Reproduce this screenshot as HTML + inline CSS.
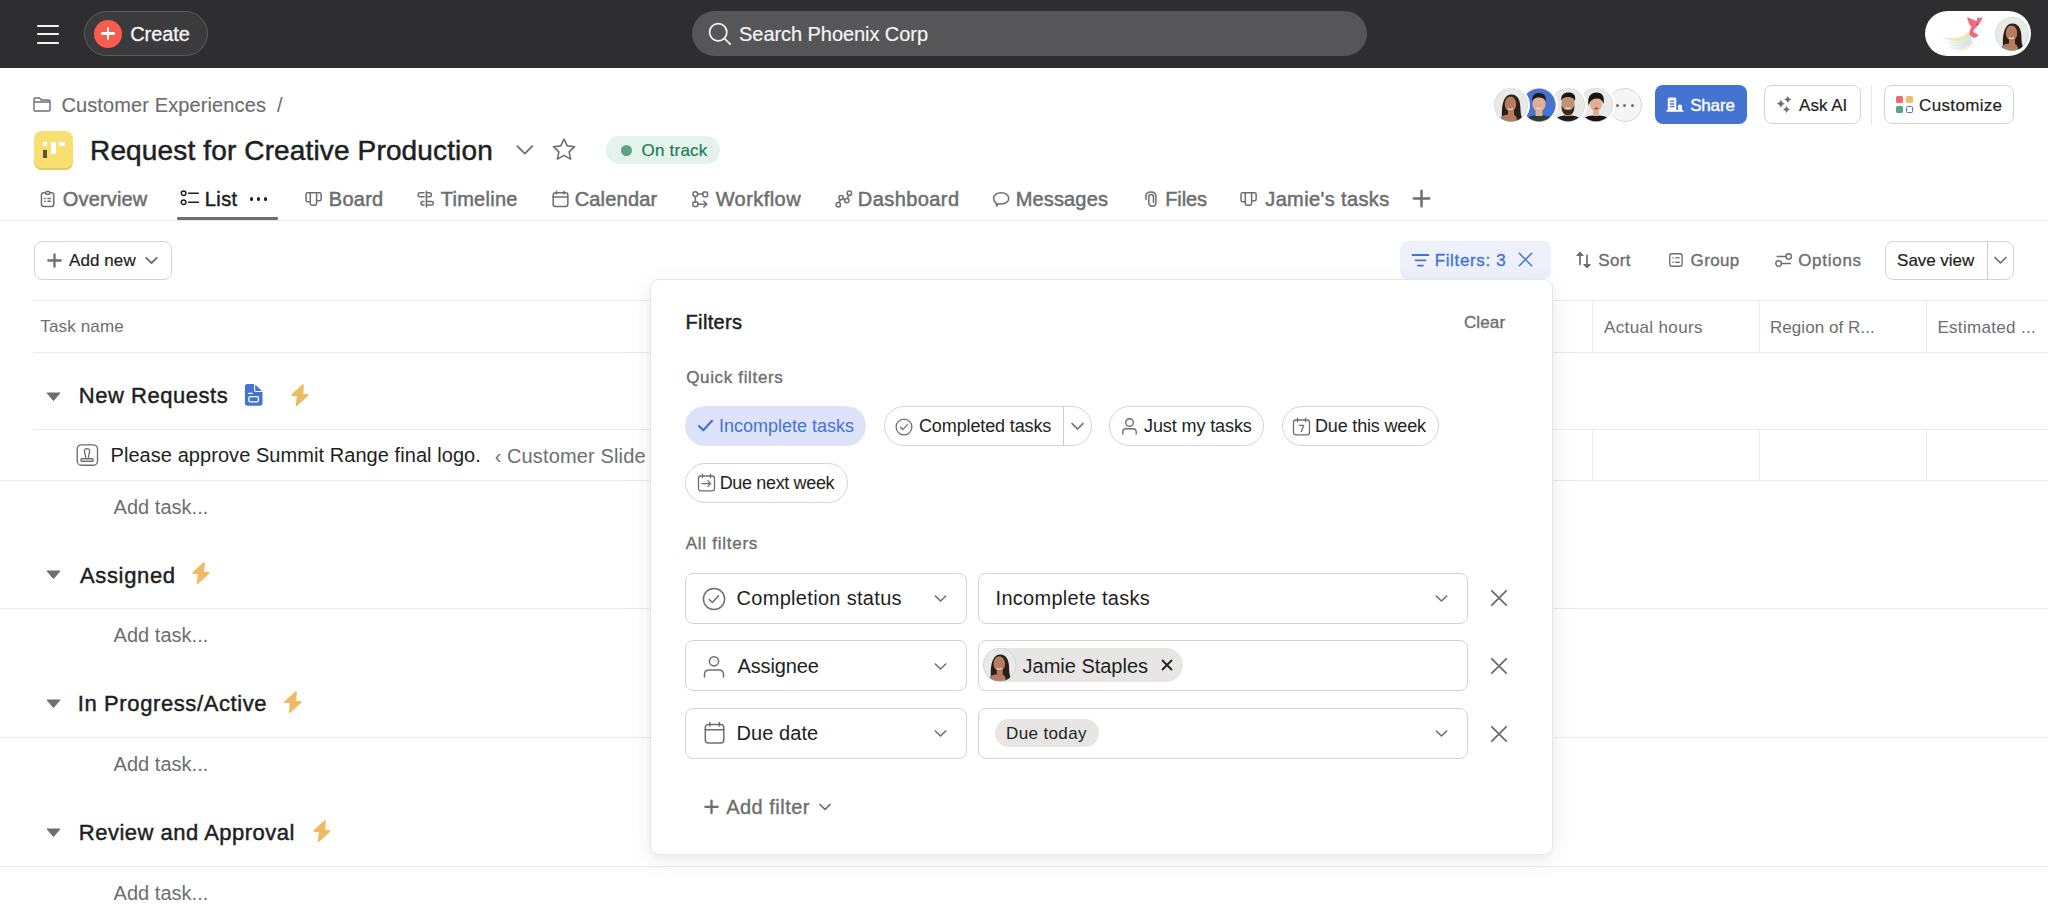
<!DOCTYPE html>
<html><head><meta charset="utf-8"><title>Request for Creative Production</title><style>
html,body{margin:0;padding:0;}
body{width:2048px;height:919px;overflow:hidden;position:relative;background:#fff;font-family:"Liberation Sans",sans-serif;}
.t{position:absolute;white-space:pre;}
svg{overflow:visible}
</style></head><body>
<div style="position:absolute;left:0px;top:0px;width:2048px;height:68px;background:#2e2e30;"></div>
<div style="position:absolute;left:37px;top:25px;width:22px;height:2px;background:#f5f4f3;border-radius:1px;"></div>
<div style="position:absolute;left:37px;top:33px;width:22px;height:2px;background:#f5f4f3;border-radius:1px;"></div>
<div style="position:absolute;left:37px;top:42px;width:22px;height:2px;background:#f5f4f3;border-radius:1px;"></div>
<div style="position:absolute;left:84px;top:11px;width:124px;height:45px;background:#3b3b3d;border:1px solid #5c5c5e;box-sizing:border-box;border-radius:23px;"></div>
<div style="position:absolute;left:94px;top:19.5px;width:28px;height:28.0px;background:#f95c4c;border-radius:50%;"></div>
<div style="position:absolute;left:101.2px;top:32.2px;width:13.599999999999994px;height:2.5999999999999943px;background:#fff;border-radius:1px;"></div>
<div style="position:absolute;left:106.7px;top:26.7px;width:2.5999999999999943px;height:13.599999999999998px;background:#fff;border-radius:1px;"></div>
<span class="t" style="left:130.15px;top:24.07px;font-size:20px;line-height:20px;color:#f5f4f3;letter-spacing:-0.041px;-webkit-text-stroke:0.3px #f5f4f3;">Create</span>
<div style="position:absolute;left:692px;top:11px;width:675px;height:45px;background:#565557;border-radius:23px;"></div>
<svg style="position:absolute;left:708px;top:22px;" width="24" height="24" viewBox="0 0 24 24" fill="none"><circle cx="10.2" cy="10.2" r="8.6" stroke="#f5f4f3" stroke-width="1.7"/><path d="M16.3 16.3 L22.2 22.2" stroke="#f5f4f3" stroke-width="1.7" stroke-linecap="round"/></svg>
<span class="t" style="left:739.10px;top:24.37px;font-size:20px;line-height:20px;color:#f5f4f3;letter-spacing:-0.066px;-webkit-text-stroke:0.2px #f5f4f3;">Search Phoenix Corp</span>
<div style="position:absolute;left:1925px;top:10.7px;width:106px;height:45.3px;background:#fff;border-radius:23px;"></div>
<svg style="position:absolute;left:1910px;top:0px;" width="80" height="60" viewBox="0 0 80 60" fill="none">
<defs><linearGradient id="tg" x1="0" y1="0" x2="1" y2="0"><stop offset="0" stop-color="#fff" stop-opacity="0"/><stop offset="1" stop-color="#fff" stop-opacity="0"/></linearGradient></defs>
<path d="M33 37 C42 40 52 38 58.5 31.5 L60.5 34.5 C54 42 43 44 33 37Z" fill="#f6c88f" opacity="0.55"/>
<path d="M35 41 C44 43.5 53 41 59.5 33.5 L61 36 C55 44.5 45 46 35 41Z" fill="#bfe8a8" opacity="0.55"/>
<path d="M37 44 C46 46.5 55 43.5 60.5 35.5 L61.8 38 C56 47 47 48.5 37 44Z" fill="#9fe0e6" opacity="0.55"/>
<path d="M39 47 C48 49 56 46 61.5 37.5 L62.3 40.5 C57 49.5 48 51 39 47Z" fill="#d3c2f5" opacity="0.55"/>
<path d="M42 49.5 C50 51 57 48.5 62 40 L62.5 43 C58 51 50 52.5 42 49.5Z" fill="#f6d98e" opacity="0.6"/>
<path d="M57 17.3 C59.5 18 62 19 64 20.5 L63.5 18.5 L66 21.5 C67 19.5 68.5 18.3 70.5 17.8 L72.8 17.3 L71.8 19.5 C70.5 22.5 68.5 25 66 27.5 C64 29.5 62.5 31 64 32.5 C65.5 33.5 67.5 33.8 68.5 35 C67.5 37 65.5 38 63 37.5 L59.8 35.2 C59 32 60 29.5 61.5 27 C60 25.5 59 24 58.5 22 C58 20.5 57.5 19 57 17.3Z" fill="#f16b7e"/>
<circle cx="68" cy="18.6" r="1.1" fill="#5b8df0"/>
<circle cx="67.4" cy="24.2" r="0.6" fill="#2a2a2a"/>
</svg>
<svg style="position:absolute;left:33px;top:97px;" width="18" height="15" viewBox="0 0 18 15" fill="none"><path d="M1 2.2 Q1 1 2.2 1 H6.5 L8.2 3 H15.8 Q17 3 17 4.2 V12.8 Q17 14 15.8 14 H2.2 Q1 14 1 12.8Z M1 5 H17" stroke="#6d6e6f" stroke-width="1.4" stroke-linejoin="round"/></svg>
<span class="t" style="left:61.48px;top:94.77px;font-size:20px;line-height:20px;color:#6d6e6f;letter-spacing:0.113px;-webkit-text-stroke:0.15px #6d6e6f;">Customer Experiences</span>
<span class="t" style="left:277.00px;top:94.77px;font-size:20px;line-height:20px;color:#6d6e6f;">/</span>
<div style="position:absolute;left:33.7px;top:130.6px;width:39.599999999999994px;height:39.0px;background:#f8df72;border-radius:8px;box-shadow:inset 0 -2px 0 #e6c95c;"></div>
<div style="position:absolute;left:42.6px;top:141.6px;width:4.799999999999997px;height:4.099999999999994px;background:#fff;"></div>
<div style="position:absolute;left:42.6px;top:149.8px;width:4.799999999999997px;height:7.899999999999977px;background:#5c5338;"></div>
<div style="position:absolute;left:51.2px;top:141.6px;width:4.599999999999994px;height:12.300000000000011px;background:#fff;"></div>
<div style="position:absolute;left:59.4px;top:141.6px;width:5.199999999999996px;height:4.700000000000017px;background:#fff;"></div>
<span class="t" style="left:90.05px;top:137.00px;font-size:28px;line-height:28px;color:#1e1f21;letter-spacing:0.142px;-webkit-text-stroke:0.5px #1e1f21;">Request for Creative Production</span>
<svg style="position:absolute;left:514px;top:143px;" width="22" height="14" viewBox="0 0 22 14" fill="none"><path d="M3.3 3.2 L10.8 10.6 L18.3 3.2" stroke="#6d6e6f" stroke-width="1.8" stroke-linecap="round" stroke-linejoin="round"/></svg>
<svg style="position:absolute;left:551px;top:137px;" width="26" height="24" viewBox="0 0 26 24" fill="none"><path d="M13 2 L16.2 8.9 L23.6 9.7 L18.1 14.8 L19.6 22.1 L13 18.4 L6.4 22.1 L7.9 14.8 L2.4 9.7 L9.8 8.9Z" stroke="#6d6e6f" stroke-width="1.6" stroke-linejoin="round"/></svg>
<div style="position:absolute;left:606px;top:136px;width:114px;height:28px;background:#e4f4ec;border-radius:14px;"></div>
<div style="position:absolute;left:621px;top:144.5px;width:11px;height:11.0px;background:#5da283;border-radius:50%;"></div>
<span class="t" style="left:641.60px;top:142.11px;font-size:17px;line-height:17px;color:#1c7c57;letter-spacing:0.209px;-webkit-text-stroke:0.2px #1c7c57;">On track</span>
<div style="position:absolute;left:1607.6px;top:88px;width:34.0px;height:34px;background:#f5f5f5;border:1px solid #d9d9d9;box-sizing:border-box;border-radius:50%;"></div>
<div style="position:absolute;left:1615.6px;top:103.5px;width:3.0px;height:3.0px;background:#6d6e6f;border-radius:50%;"></div>
<div style="position:absolute;left:1623.1px;top:103.5px;width:3.0px;height:3.0px;background:#6d6e6f;border-radius:50%;"></div>
<div style="position:absolute;left:1630.6px;top:103.5px;width:3.0px;height:3.0px;background:#6d6e6f;border-radius:50%;"></div>
<svg style="position:absolute;left:1579.2px;top:88.0px;" width="34" height="34" viewBox="0 0 34 34" fill="none"><circle cx="17.0" cy="17.0" r="19.0" fill="#fff"/><clipPath id="cpa4"><circle cx="17" cy="17" r="16.6"/></clipPath><g transform="scale(1.0)"><g clip-path="url(#cpa4)"><rect width="34" height="34" fill="#ebe9e8"/><path d="M1 34 C3 29 9 27.5 17 27.5 C25 27.5 31 29 33 34Z" fill="#141414"/><rect x="14" y="20" width="6" height="8" fill="#ddb095"/><ellipse cx="17" cy="16" rx="6" ry="7.6" fill="#ddb095"/><path d="M9.5 18 C8 8 12 4.5 17.5 4.5 C23 4.5 26 8 24.5 16 C23.5 12 21 10 17 10.5 C13 11 11 13 9.5 18Z" fill="#151313"/><ellipse cx="17.3" cy="20.6" rx="2.2" ry="1" fill="#c8343c"/></g><circle cx="17" cy="17" r="16.6" stroke="#c9a6e8" stroke-width="0.8" opacity="0.55"/></g></svg>
<svg style="position:absolute;left:1550.8px;top:88.0px;" width="34" height="34" viewBox="0 0 34 34" fill="none"><circle cx="17.0" cy="17.0" r="19.0" fill="#fff"/><clipPath id="cpa3"><circle cx="17" cy="17" r="16.6"/></clipPath><g transform="scale(1.0)"><g clip-path="url(#cpa3)"><rect width="34" height="34" fill="#ebe9e8"/><path d="M2 34 C4 29 9 27.5 17 27.5 C25 27.5 30 29 32 34Z" fill="#1d1d1d"/><rect x="13.5" y="20" width="7" height="8" fill="#c39075"/><ellipse cx="17" cy="15.5" rx="6.5" ry="8" fill="#c39075"/><path d="M10.5 17 C10.5 25 13 27 17 27 C21 27 23.5 25 23.5 17 C22 21 20 22 17 22 C14 22 12 21 10.5 17Z" fill="#3a2a22"/><path d="M10.3 13.5 C9.5 6.5 13 4.5 17.5 4.5 C22 4.5 25.5 6.5 23.8 13.5 C23 10 20 9 17 9 C14 9 11 10 10.3 13.5Z" fill="#1c1613"/><path d="M14.5 19.8 Q17 21.3 19.5 19.8" stroke="#f4e6e0" stroke-width="1.1" fill="none"/></g><circle cx="17" cy="17" r="16.6" stroke="#8ed3cb" stroke-width="0.8" opacity="0.55"/></g></svg>
<svg style="position:absolute;left:1522.4px;top:88.0px;" width="34" height="34" viewBox="0 0 34 34" fill="none"><circle cx="17.0" cy="17.0" r="19.0" fill="#fff"/><clipPath id="cpa2"><circle cx="17" cy="17" r="16.6"/></clipPath><g transform="scale(1.0)"><g clip-path="url(#cpa2)"><rect width="34" height="34" fill="#4573d2"/><path d="M2 34 C4 29 9 27 17 27 C25 27 30 29 32 34Z" fill="#2b3d36"/><rect x="13.5" y="20" width="7" height="8" fill="#ddb094"/><ellipse cx="17" cy="15.8" rx="6.6" ry="8" fill="#ddb094"/><path d="M10.2 14 C9.5 7 13 5 17 5 C21.5 5 24.5 7 23.8 14 C23 10.5 20 9.5 17 9.5 C14 9.5 11 10.5 10.2 14Z" fill="#1f1a17"/><path d="M14.2 19.8 Q17 21.8 19.8 19.8" stroke="#f4e6e0" stroke-width="1.2" fill="none"/></g><circle cx="17" cy="17" r="16.6" stroke="#e8a0a8" stroke-width="0.8" opacity="0.55"/></g></svg>
<svg style="position:absolute;left:1493.9px;top:88.0px;" width="34" height="34" viewBox="0 0 34 34" fill="none"><circle cx="17.0" cy="17.0" r="19.0" fill="#fff"/><clipPath id="cpa1"><circle cx="17" cy="17" r="16.6"/></clipPath><g transform="scale(1.0)"><g clip-path="url(#cpa1)"><rect width="34" height="34" fill="#ebe9e8"/><path d="M8.5 34 C7 22 8 7 17 6.5 C25 6.5 26.5 14 26.5 22 C26.5 27 28 31 30 34Z" fill="#2b1d18"/><rect x="14" y="19" width="6" height="8" fill="#b47c60"/><path d="M4 34 C6 28 10 26.5 17 26.5 C21 26.5 23 28 24 34Z" fill="#b47c60"/><path d="M3 34 L6 29.5 L9 30 L8 34Z" fill="#7b4fd0"/><ellipse cx="16.5" cy="16" rx="5.8" ry="7.6" fill="#b47c60"/><path d="M22 10 C25 13 25.5 20 25.5 24 C25.5 29 27 32 29 34 L23 34 C22.5 28 22.8 18 22 10Z" fill="#2b1d18"/><path d="M14 20.5 Q16.5 22.5 19 20.5" stroke="#f4e6e0" stroke-width="1.2" fill="none"/></g><circle cx="17" cy="17" r="16.6" stroke="#8ed3cb" stroke-width="0.8" opacity="0.55"/></g></svg>
<svg style="position:absolute;left:1995.0px;top:17.0px;" width="34" height="34" viewBox="0 0 34 34" fill="none"><clipPath id="cpa0"><circle cx="17" cy="17" r="16.6"/></clipPath><g transform="scale(1.0)"><g clip-path="url(#cpa0)"><rect width="34" height="34" fill="#ebe9e8"/><path d="M8.5 34 C7 22 8 7 17 6.5 C25 6.5 26.5 14 26.5 22 C26.5 27 28 31 30 34Z" fill="#2b1d18"/><rect x="14" y="19" width="6" height="8" fill="#b47c60"/><path d="M4 34 C6 28 10 26.5 17 26.5 C21 26.5 23 28 24 34Z" fill="#b47c60"/><path d="M3 34 L6 29.5 L9 30 L8 34Z" fill="#7b4fd0"/><ellipse cx="16.5" cy="16" rx="5.8" ry="7.6" fill="#b47c60"/><path d="M22 10 C25 13 25.5 20 25.5 24 C25.5 29 27 32 29 34 L23 34 C22.5 28 22.8 18 22 10Z" fill="#2b1d18"/><path d="M14 20.5 Q16.5 22.5 19 20.5" stroke="#f4e6e0" stroke-width="1.2" fill="none"/></g><circle cx="17" cy="17" r="16.6" stroke="#8ed3cb" stroke-width="0.8" opacity="0.55"/></g></svg>
<div style="position:absolute;left:1655px;top:85px;width:92px;height:39px;background:#4573d2;border-radius:8px;"></div>
<svg style="position:absolute;left:1660px;top:92px;" width="28" height="24" viewBox="0 0 28 24" fill="none"><path d="M7.8 7 Q7.8 5.5 9.3 5.5 H14.8 Q16.3 5.5 16.3 7 V18 H7.8Z" fill="#fff"/><path d="M18 13.8 Q18 12.8 19 12.8 H20.9 Q21.9 12.8 21.9 13.8 V18 H18Z" fill="#fff"/><rect x="6.4" y="17.9" width="17.1" height="1.9" rx="0.9" fill="#fff"/><path d="M10.4 9.1 H13.9 M10.4 12 H13.9 M10.4 14.7 H13.9" stroke="#4573d2" stroke-width="1.3" stroke-linecap="round"/></svg>
<span class="t" style="left:1690.17px;top:96.81px;font-size:17px;line-height:17px;color:#fff;letter-spacing:-0.165px;-webkit-text-stroke:0.35px #fff;">Share</span>
<div style="position:absolute;left:1764px;top:85px;width:97px;height:39px;border:1px solid #d6d3d3;box-sizing:border-box;border-radius:8px;"></div>
<svg style="position:absolute;left:1772px;top:92px;" width="24" height="24" viewBox="0 0 24 24" fill="none"><path d="M8.9 7.3999999999999995 Q9.638 10.926 13.0 11.7 Q9.638 12.473999999999998 8.9 16.0 Q8.162 12.473999999999998 4.800000000000001 11.7 Q8.162 10.926 8.9 7.3999999999999995Z" fill="#6d6e6f"/><path d="M15.8 3.9000000000000004 Q16.448 6.7700000000000005 19.400000000000002 7.4 Q16.448 8.030000000000001 15.8 10.9 Q15.152000000000001 8.030000000000001 12.200000000000001 7.4 Q15.152000000000001 6.7700000000000005 15.8 3.9000000000000004Z" fill="#6d6e6f"/><path d="M14.5 13.7 Q15.112 16.733999999999998 17.9 17.4 Q15.112 18.066 14.5 21.099999999999998 Q13.888 18.066 11.1 17.4 Q13.888 16.733999999999998 14.5 13.7Z" fill="#6d6e6f"/></svg>
<span class="t" style="left:1799.10px;top:96.81px;font-size:17px;line-height:17px;color:#1e1f21;letter-spacing:-0.020px;-webkit-text-stroke:0.2px #1e1f21;">Ask AI</span>
<div style="position:absolute;left:1871px;top:85px;width:1px;height:39px;background:#e6e4e4;"></div>
<div style="position:absolute;left:1884px;top:85px;width:130px;height:39px;border:1px solid #d6d3d3;box-sizing:border-box;border-radius:8px;"></div>
<div style="position:absolute;left:1895.5px;top:96.2px;width:7.099999999999909px;height:7.0px;background:#f06a6a;border-radius:1.5px;"></div>
<div style="position:absolute;left:1906px;top:96.2px;width:7px;height:7.0px;background:#f1bd6c;border-radius:1.5px;"></div>
<div style="position:absolute;left:1895.5px;top:106.2px;width:7.099999999999909px;height:7.0px;background:#5da283;border-radius:1.5px;"></div>
<div style="position:absolute;left:1906px;top:106.2px;width:7px;height:7.0px;border:1.5px solid #4573d2;box-sizing:border-box;border-radius:1.5px;"></div>
<span class="t" style="left:1919.10px;top:96.81px;font-size:17px;line-height:17px;color:#1e1f21;letter-spacing:0.332px;-webkit-text-stroke:0.2px #1e1f21;">Customize</span>
<svg style="position:absolute;left:36px;top:185px;" width="24" height="27" viewBox="0 0 24 27" fill="none"><rect x="5.45" y="7.75" width="12.3" height="13.8" rx="2.2" stroke="#6d6e6f" stroke-width="1.5" stroke-linecap="round" stroke-linejoin="round"/><rect x="9.6" y="6.6" width="4.2" height="2.6" rx="1.2" stroke="#6d6e6f" stroke-width="1.5" stroke-linecap="round" stroke-linejoin="round" fill="#fff"/><path d="M8.7 13.4 H9.2 M11.9 13.4 H14.3 M8.7 16.2 H9.2 M11.9 16.2 H14.3" stroke="#6d6e6f" stroke-width="1.5" stroke-linecap="round" stroke-linejoin="round"/></svg>
<span class="t" style="left:62.85px;top:189.07px;font-size:20px;line-height:20px;color:#6d6e6f;letter-spacing:0.142px;-webkit-text-stroke:0.5px #6d6e6f;">Overview</span>
<svg style="position:absolute;left:180px;top:189px;" width="20" height="18" viewBox="0 0 20 18" fill="none"><circle cx="3.6" cy="4.2" r="2.3" stroke="#1e1f21" stroke-width="1.5"/><circle cx="3.6" cy="13.2" r="2.3" stroke="#1e1f21" stroke-width="1.5"/><path d="M8.5 4.2 H18.3 M8.5 13.2 H18.3" stroke="#1e1f21" stroke-width="1.5" stroke-linecap="round"/></svg>
<span class="t" style="left:204.75px;top:189.07px;font-size:20px;line-height:20px;color:#1e1f21;letter-spacing:0.411px;-webkit-text-stroke:0.5px #1e1f21;">List</span>
<div style="position:absolute;left:249.9px;top:197.4px;width:3.1999999999999886px;height:3.1999999999999886px;background:#1e1f21;border-radius:50%;"></div>
<div style="position:absolute;left:256.9px;top:197.4px;width:3.2000000000000455px;height:3.1999999999999886px;background:#1e1f21;border-radius:50%;"></div>
<div style="position:absolute;left:263.9px;top:197.4px;width:3.2000000000000455px;height:3.1999999999999886px;background:#1e1f21;border-radius:50%;"></div>
<div style="position:absolute;left:177px;top:217px;width:101px;height:3px;background:#6d6e6f;border-radius:1px;"></div>
<svg style="position:absolute;left:304.3px;top:189.5px;" width="19" height="17" viewBox="0 0 19 17" fill="none"><path d="M2.05 4.2 Q2.05 2.65 3.6 2.65 H15.6 Q17.15 2.65 17.15 4.2 V9.2 Q17.15 10.75 15.6 10.75 H12.6 M2.05 4.2 V10.2 Q2.05 11.75 3.6 11.75 H6.3 M6.3 2.65 V13.6 Q6.3 15.15 7.85 15.15 H11.05 Q12.6 15.15 12.6 13.6 V2.65" stroke="#6d6e6f" stroke-width="1.5" stroke-linecap="round" stroke-linejoin="round"/></svg>
<span class="t" style="left:328.85px;top:189.07px;font-size:20px;line-height:20px;color:#6d6e6f;letter-spacing:0.238px;-webkit-text-stroke:0.5px #6d6e6f;">Board</span>
<svg style="position:absolute;left:412px;top:185px;" width="24" height="24" viewBox="0 0 24 24" fill="none"><path d="M14.4 6.3 V22 M12 7.8 H8.1 Q6.1 7.8 6.1 9.8 Q6.1 11.8 8.1 11.8 H12 M14.4 7.8 H17.4 Q19.4 7.8 19.4 9.8 Q19.4 11.8 17.4 11.8 H14.4 M12 16.4 H11.2 Q9 16.4 9 18.25 Q9 20.1 11.2 20.1 H12 M14.4 16.4 H19.8 Q21.2 16.4 21.2 17.8 V18.7 Q21.2 20.1 19.8 20.1 H14.4" stroke="#6d6e6f" stroke-width="1.5" stroke-linecap="round" stroke-linejoin="round"/></svg>
<span class="t" style="left:440.65px;top:189.07px;font-size:20px;line-height:20px;color:#6d6e6f;letter-spacing:0.284px;-webkit-text-stroke:0.5px #6d6e6f;">Timeline</span>
<svg style="position:absolute;left:548px;top:185px;" width="24" height="24" viewBox="0 0 24 24" fill="none"><rect x="5.15" y="7.75" width="14.7" height="13.8" rx="2.5" stroke="#6d6e6f" stroke-width="1.5" stroke-linecap="round" stroke-linejoin="round"/><path d="M5.15 12 H19.85 M8.5 6.2 V9 M15.9 6.2 V9" stroke="#6d6e6f" stroke-width="1.5" stroke-linecap="round" stroke-linejoin="round"/></svg>
<span class="t" style="left:574.65px;top:189.07px;font-size:20px;line-height:20px;color:#6d6e6f;letter-spacing:0.200px;-webkit-text-stroke:0.5px #6d6e6f;">Calendar</span>
<svg style="position:absolute;left:688px;top:185px;" width="24" height="24" viewBox="0 0 24 24" fill="none"><circle cx="7.3" cy="9.1" r="2.4" stroke="#6d6e6f" stroke-width="1.5" stroke-linecap="round" stroke-linejoin="round"/><rect x="14.85" y="7.05" width="4.7" height="4.7" rx="1.2" stroke="#6d6e6f" stroke-width="1.5" stroke-linecap="round" stroke-linejoin="round"/><rect x="4.85" y="17.05" width="5" height="4.5" rx="1.2" stroke="#6d6e6f" stroke-width="1.5" stroke-linecap="round" stroke-linejoin="round"/><path d="M9.7 9.1 H14.85 M7.3 11.5 V17.05 M9.85 19.2 H18.8 M15.8 16.4 L18.8 19.2 L15.8 22" stroke="#6d6e6f" stroke-width="1.5" stroke-linecap="round" stroke-linejoin="round"/></svg>
<span class="t" style="left:715.65px;top:189.07px;font-size:20px;line-height:20px;color:#6d6e6f;letter-spacing:0.440px;-webkit-text-stroke:0.5px #6d6e6f;">Workflow</span>
<svg style="position:absolute;left:832px;top:185px;" width="24" height="24" viewBox="0 0 24 24" fill="none"><circle cx="6.3" cy="19.7" r="2.2" stroke="#6d6e6f" stroke-width="1.5" stroke-linecap="round" stroke-linejoin="round"/><circle cx="9.1" cy="12.6" r="2.2" stroke="#6d6e6f" stroke-width="1.5" stroke-linecap="round" stroke-linejoin="round"/><circle cx="14.8" cy="15.6" r="2.2" stroke="#6d6e6f" stroke-width="1.5" stroke-linecap="round" stroke-linejoin="round"/><circle cx="17.4" cy="8.2" r="2.2" stroke="#6d6e6f" stroke-width="1.5" stroke-linecap="round" stroke-linejoin="round"/><path d="M7.1 17.6 L8.3 14.7 M11.1 13.6 L12.8 14.6 M15.5 13.5 L16.7 10.3" stroke="#6d6e6f" stroke-width="1.5" stroke-linecap="round" stroke-linejoin="round"/></svg>
<span class="t" style="left:857.85px;top:189.07px;font-size:20px;line-height:20px;color:#6d6e6f;letter-spacing:0.423px;-webkit-text-stroke:0.5px #6d6e6f;">Dashboard</span>
<svg style="position:absolute;left:988px;top:185px;" width="24" height="24" viewBox="0 0 24 24" fill="none"><path d="M13.2 7.75 C17.6 7.75 20.7 10.2 20.7 13.4 C20.7 16.6 17.6 19.1 13.2 19.1 C12.1 19.1 11 18.9 10 18.6 L8.6 21 L8.1 18 C6.3 16.9 5.6 15.3 5.6 13.4 C5.6 10.2 8.8 7.75 13.2 7.75Z" stroke="#6d6e6f" stroke-width="1.5" stroke-linecap="round" stroke-linejoin="round"/></svg>
<span class="t" style="left:1015.65px;top:189.07px;font-size:20px;line-height:20px;color:#6d6e6f;letter-spacing:0.164px;-webkit-text-stroke:0.5px #6d6e6f;">Messages</span>
<svg style="position:absolute;left:1140px;top:185px;" width="24" height="24" viewBox="0 0 24 24" fill="none"><path d="M6 14.5 V11 Q6 6.9 10.9 6.9 Q15.9 6.9 15.9 11.5 V17.6 Q15.9 21.3 12.3 21.3 Q8.8 21.3 8.8 17.6 V12 Q8.8 9.5 11.15 9.5 Q13.5 9.5 13.5 12 V17.6" stroke="#6d6e6f" stroke-width="1.5" stroke-linecap="round" stroke-linejoin="round"/></svg>
<span class="t" style="left:1165.25px;top:189.07px;font-size:20px;line-height:20px;color:#6d6e6f;letter-spacing:-0.107px;-webkit-text-stroke:0.5px #6d6e6f;">Files</span>
<svg style="position:absolute;left:1239.3px;top:189.5px;" width="19" height="17" viewBox="0 0 19 17" fill="none"><path d="M2.05 4.2 Q2.05 2.65 3.6 2.65 H15.6 Q17.15 2.65 17.15 4.2 V9.2 Q17.15 10.75 15.6 10.75 H12.6 M2.05 4.2 V10.2 Q2.05 11.75 3.6 11.75 H6.3 M6.3 2.65 V13.6 Q6.3 15.15 7.85 15.15 H11.05 Q12.6 15.15 12.6 13.6 V2.65" stroke="#6d6e6f" stroke-width="1.5" stroke-linecap="round" stroke-linejoin="round"/></svg>
<span class="t" style="left:1265.25px;top:189.07px;font-size:20px;line-height:20px;color:#6d6e6f;letter-spacing:0.375px;-webkit-text-stroke:0.5px #6d6e6f;">Jamie's tasks</span>
<svg style="position:absolute;left:1412px;top:189px;" width="19" height="19" viewBox="0 0 19 19" fill="none"><path d="M9.5 1.8 V17.2 M1.8 9.5 H17.2" stroke="#6d6e6f" stroke-width="2.5" stroke-linecap="round"/></svg>
<div style="position:absolute;left:0px;top:220px;width:2048px;height:1px;background:#edeae9;"></div>
<div style="position:absolute;left:34px;top:241px;width:138px;height:39px;border:1px solid #d6d3d3;box-sizing:border-box;border-radius:8px;"></div>
<svg style="position:absolute;left:47px;top:253px;" width="15" height="15" viewBox="0 0 15 15" fill="none"><path d="M7.5 1.3 V13.7 M1.3 7.5 H13.7" stroke="#6d6e6f" stroke-width="2.3" stroke-linecap="round"/></svg>
<span class="t" style="left:69.10px;top:252.11px;font-size:17px;line-height:17px;color:#1e1f21;letter-spacing:0.070px;-webkit-text-stroke:0.2px #1e1f21;">Add new</span>
<svg style="position:absolute;left:144px;top:255px;" width="15" height="10" viewBox="0 0 15 10" fill="none"><path d="M2.2 2.8 L7.5 8 L12.8 2.8" stroke="#6d6e6f" stroke-width="1.8" stroke-linecap="round" stroke-linejoin="round"/></svg>
<div style="position:absolute;left:1400px;top:241px;width:151px;height:38px;background:#eef0fb;border-radius:8px;"></div>
<svg style="position:absolute;left:1411px;top:253px;" width="19" height="15" viewBox="0 0 19 15" fill="none"><path d="M1.5 2 H17.5 M4.5 7.3 H14.5 M7 12.6 H12" stroke="#4573d2" stroke-width="1.8" stroke-linecap="round"/></svg>
<span class="t" style="left:1434.67px;top:252.21px;font-size:17px;line-height:17px;color:#4573d2;letter-spacing:0.647px;-webkit-text-stroke:0.35px #4573d2;">Filters: 3</span>
<svg style="position:absolute;left:1517px;top:251px;" width="17" height="17" viewBox="0 0 17 17" fill="none"><path d="M2.3 2.3 L14.7 14.7 M14.7 2.3 L2.3 14.7" stroke="#4573d2" stroke-width="1.5" stroke-linecap="round"/></svg>
<svg style="position:absolute;left:1570px;top:245px;" width="30" height="30" viewBox="0 0 30 30" fill="none"><path d="M10 10 V19.6 M17 10.3 V20" stroke="#6d6e6f" stroke-width="1.7" stroke-linecap="round"/><path d="M10 7 L13.3 10.5 H6.7Z M17 22.9 L20.4 19.6 H13.6Z" fill="#6d6e6f" stroke="#6d6e6f" stroke-width="1" stroke-linejoin="round"/></svg>
<span class="t" style="left:1598.17px;top:252.21px;font-size:17px;line-height:17px;color:#6d6e6f;letter-spacing:0.398px;-webkit-text-stroke:0.35px #6d6e6f;">Sort</span>
<svg style="position:absolute;left:1662px;top:245px;" width="30" height="30" viewBox="0 0 30 30" fill="none"><rect x="7.75" y="8.75" width="12.3" height="12.5" rx="2.2" stroke="#6d6e6f" stroke-width="1.35"/><path d="M10.8 12.8 H11.1 M13.8 12.8 H17.2 M10.8 17.2 H11.1 M13.8 17.2 H17.2" stroke="#6d6e6f" stroke-width="1.35" stroke-linecap="round"/></svg>
<span class="t" style="left:1690.58px;top:252.21px;font-size:17px;line-height:17px;color:#6d6e6f;letter-spacing:0.364px;-webkit-text-stroke:0.35px #6d6e6f;">Group</span>
<svg style="position:absolute;left:1770px;top:245px;" width="30" height="30" viewBox="0 0 30 30" fill="none"><circle cx="18.7" cy="11.5" r="2.8" stroke="#6d6e6f" stroke-width="1.35"/><circle cx="8.6" cy="18.5" r="2.8" stroke="#6d6e6f" stroke-width="1.35"/><path d="M7.2 11.5 H15.9 M11.4 18.5 H20.4" stroke="#6d6e6f" stroke-width="1.35" stroke-linecap="round"/></svg>
<span class="t" style="left:1798.17px;top:252.21px;font-size:17px;line-height:17px;color:#6d6e6f;letter-spacing:0.727px;-webkit-text-stroke:0.35px #6d6e6f;">Options</span>
<div style="position:absolute;left:1885px;top:241px;width:129px;height:39px;border:1px solid #d6d3d3;box-sizing:border-box;border-radius:8px;"></div>
<div style="position:absolute;left:1987px;top:241px;width:1px;height:39px;background:#cfcbcb;"></div>
<span class="t" style="left:1897.10px;top:252.21px;font-size:17px;line-height:17px;color:#1e1f21;letter-spacing:-0.050px;-webkit-text-stroke:0.2px #1e1f21;">Save view</span>
<svg style="position:absolute;left:1993px;top:255px;" width="15" height="10" viewBox="0 0 15 10" fill="none"><path d="M2 2.5 L7.5 8 L13 2.5" stroke="#6d6e6f" stroke-width="1.7" stroke-linecap="round" stroke-linejoin="round"/></svg>
<div style="position:absolute;left:33px;top:300px;width:2015px;height:1px;background:#edeae9;"></div>
<div style="position:absolute;left:33px;top:352px;width:2015px;height:1px;background:#edeae9;"></div>
<span class="t" style="left:40.30px;top:317.61px;font-size:17px;line-height:17px;color:#6d6e6f;letter-spacing:0.156px;">Task name</span>
<div style="position:absolute;left:1592px;top:300px;width:1px;height:52px;background:#edeae9;"></div>
<div style="position:absolute;left:1592px;top:430px;width:1px;height:50px;background:#edeae9;"></div>
<div style="position:absolute;left:1759px;top:300px;width:1px;height:52px;background:#edeae9;"></div>
<div style="position:absolute;left:1759px;top:430px;width:1px;height:50px;background:#edeae9;"></div>
<div style="position:absolute;left:1926px;top:300px;width:1px;height:52px;background:#edeae9;"></div>
<div style="position:absolute;left:1926px;top:430px;width:1px;height:50px;background:#edeae9;"></div>
<span class="t" style="left:1604.00px;top:319.31px;font-size:17px;line-height:17px;color:#6d6e6f;letter-spacing:0.364px;">Actual hours</span>
<span class="t" style="left:1770.00px;top:319.31px;font-size:17px;line-height:17px;color:#6d6e6f;letter-spacing:0.060px;">Region of R...</span>
<span class="t" style="left:1937.40px;top:319.31px;font-size:17px;line-height:17px;color:#6d6e6f;letter-spacing:0.320px;">Estimated ...</span>
<svg style="position:absolute;left:46px;top:391.5px;" width="15" height="9" viewBox="0 0 15 9" fill="none"><path d="M1 1 H14 L7.5 8.5Z" fill="#6d6e6f" stroke="#6d6e6f" stroke-width="1" stroke-linejoin="round"/></svg>
<span class="t" style="left:78.82px;top:385.18px;font-size:22px;line-height:22px;color:#1e1f21;letter-spacing:0.535px;-webkit-text-stroke:0.45px #1e1f21;">New Requests</span>
<svg style="position:absolute;left:240px;top:380px;" width="26" height="30" viewBox="0 0 26 30" fill="none"><path d="M7.7 3.9 H14 L22.5 12 V23 Q22.5 25.8 19.7 25.8 H7.7 Q4.9 25.8 4.9 23 V6.7 Q4.9 3.9 7.7 3.9Z" fill="#4573d2"/><path d="M14.6 4 V10.3 Q14.6 11.5 15.8 11.5 H22.5" stroke="#fff" stroke-width="1.1" fill="#4573d2"/><rect x="8.9" y="16.6" width="9.5" height="5.3" rx="1.3" stroke="#fff" stroke-width="1.3"/><path d="M8.6 13.4 H12.3" stroke="#fff" stroke-width="1.2" stroke-linecap="round"/></svg>
<svg style="position:absolute;left:286.5px;top:380px;" width="26" height="30" viewBox="0 0 26 30" fill="none"><path d="M16 5.2 L5.2 15 L10.9 15.3 L9.6 25 L20.6 15 L15.2 14.6Z" fill="#f0b964" stroke="#f0b964" stroke-width="1.8" stroke-linejoin="round"/></svg>
<div style="position:absolute;left:33px;top:429px;width:2015px;height:1px;background:#edeae9;"></div>
<svg style="position:absolute;left:72px;top:440px;" width="30" height="30" viewBox="0 0 30 30" fill="none"><rect x="5.2" y="4.8" width="20.3" height="20.4" rx="4.3" stroke="#6d6e6f" stroke-width="1.35"/><path d="M13.8 17.9 L12.5 11.5 Q12.2 8.7 15.05 8.7 Q17.9 8.7 17.6 11.5 L16.3 17.9" stroke="#6d6e6f" stroke-width="1.3" stroke-linejoin="round"/><rect x="8.9" y="18.6" width="12.3" height="2.8" rx="1.2" stroke="#6d6e6f" stroke-width="1.3" fill="#d6d6d6"/></svg>
<span class="t" style="left:110.50px;top:445.07px;font-size:20px;line-height:20px;color:#1e1f21;letter-spacing:0.062px;">Please approve Summit Range final logo.</span>
<span class="t" style="left:494.80px;top:445.57px;font-size:20px;line-height:20px;color:#6d6e6f;">‹</span>
<span class="t" style="left:507.00px;top:445.57px;font-size:20px;line-height:20px;color:#6d6e6f;letter-spacing:0.139px;">Customer Slide</span>
<div style="position:absolute;left:0px;top:480px;width:2048px;height:1px;background:#edeae9;"></div>
<span class="t" style="left:113.60px;top:496.77px;font-size:20px;line-height:20px;color:#6d6e6f;letter-spacing:0.026px;">Add task...</span>
<svg style="position:absolute;left:46px;top:570px;" width="15" height="9" viewBox="0 0 15 9" fill="none"><path d="M1 1 H14 L7.5 8.5Z" fill="#6d6e6f" stroke="#6d6e6f" stroke-width="1" stroke-linejoin="round"/></svg>
<span class="t" style="left:80.02px;top:564.58px;font-size:22px;line-height:22px;color:#1e1f21;letter-spacing:0.640px;-webkit-text-stroke:0.45px #1e1f21;">Assigned</span>
<svg style="position:absolute;left:188px;top:558px;" width="26" height="30" viewBox="0 0 26 30" fill="none"><path d="M16 5.2 L5.2 15 L10.9 15.3 L9.6 25 L20.6 15 L15.2 14.6Z" fill="#f0b964" stroke="#f0b964" stroke-width="1.8" stroke-linejoin="round"/></svg>
<div style="position:absolute;left:0px;top:608px;width:2048px;height:1px;background:#edeae9;"></div>
<span class="t" style="left:113.60px;top:625.07px;font-size:20px;line-height:20px;color:#6d6e6f;letter-spacing:0.026px;">Add task...</span>
<svg style="position:absolute;left:46px;top:699px;" width="15" height="9" viewBox="0 0 15 9" fill="none"><path d="M1 1 H14 L7.5 8.5Z" fill="#6d6e6f" stroke="#6d6e6f" stroke-width="1" stroke-linejoin="round"/></svg>
<span class="t" style="left:77.82px;top:693.38px;font-size:22px;line-height:22px;color:#1e1f21;letter-spacing:0.604px;-webkit-text-stroke:0.45px #1e1f21;">In Progress/Active</span>
<svg style="position:absolute;left:280px;top:687px;" width="26" height="30" viewBox="0 0 26 30" fill="none"><path d="M16 5.2 L5.2 15 L10.9 15.3 L9.6 25 L20.6 15 L15.2 14.6Z" fill="#f0b964" stroke="#f0b964" stroke-width="1.8" stroke-linejoin="round"/></svg>
<div style="position:absolute;left:0px;top:737px;width:2048px;height:1px;background:#edeae9;"></div>
<span class="t" style="left:113.60px;top:753.87px;font-size:20px;line-height:20px;color:#6d6e6f;letter-spacing:0.026px;">Add task...</span>
<svg style="position:absolute;left:46px;top:828px;" width="15" height="9" viewBox="0 0 15 9" fill="none"><path d="M1 1 H14 L7.5 8.5Z" fill="#6d6e6f" stroke="#6d6e6f" stroke-width="1" stroke-linejoin="round"/></svg>
<span class="t" style="left:78.82px;top:822.38px;font-size:22px;line-height:22px;color:#1e1f21;letter-spacing:0.497px;-webkit-text-stroke:0.45px #1e1f21;">Review and Approval</span>
<svg style="position:absolute;left:309px;top:816px;" width="26" height="30" viewBox="0 0 26 30" fill="none"><path d="M16 5.2 L5.2 15 L10.9 15.3 L9.6 25 L20.6 15 L15.2 14.6Z" fill="#f0b964" stroke="#f0b964" stroke-width="1.8" stroke-linejoin="round"/></svg>
<div style="position:absolute;left:0px;top:866px;width:2048px;height:1px;background:#edeae9;"></div>
<span class="t" style="left:113.60px;top:882.87px;font-size:20px;line-height:20px;color:#6d6e6f;letter-spacing:0.026px;">Add task...</span>
<div style="position:absolute;left:651px;top:279.5px;width:901px;height:574.5px;background:#fff;border-radius:8px;box-shadow:0 0 0 1px #e8e6e6, 0 6px 22px rgba(100,100,110,0.13), 0 2px 6px rgba(100,100,110,0.06);"></div>
<span class="t" style="left:685.55px;top:311.77px;font-size:20px;line-height:20px;color:#1e1f21;letter-spacing:0.343px;-webkit-text-stroke:0.5px #1e1f21;">Filters</span>
<span class="t" style="left:1463.97px;top:314.11px;font-size:17px;line-height:17px;color:#6d6e6f;letter-spacing:0.122px;-webkit-text-stroke:0.35px #6d6e6f;">Clear</span>
<span class="t" style="left:686.17px;top:368.61px;font-size:17px;line-height:17px;color:#6d6e6f;letter-spacing:0.655px;-webkit-text-stroke:0.35px #6d6e6f;">Quick filters</span>
<div style="position:absolute;left:685px;top:406px;width:181.29999999999995px;height:40.30000000000001px;background:#dee2fa;border-radius:20px;"></div>
<svg style="position:absolute;left:697px;top:418px;" width="17" height="15" viewBox="0 0 17 15" fill="none"><path d="M2 8 L6.3 12.3 L15 2.8" stroke="#4573d2" stroke-width="2.2" stroke-linecap="round" stroke-linejoin="round"/></svg>
<span class="t" style="left:719.00px;top:416.96px;font-size:18px;line-height:18px;color:#4573d2;letter-spacing:-0.004px;">Incomplete tasks</span>
<div style="position:absolute;left:883.6px;top:406px;width:208.39999999999998px;height:40.30000000000001px;border:1px solid #d6d3d3;box-sizing:border-box;border-radius:20px;"></div>
<div style="position:absolute;left:1062.5px;top:406px;width:1.0px;height:40.30000000000001px;background:#cfcbcb;"></div>
<svg style="position:absolute;left:894.5px;top:418px;" width="18" height="18" viewBox="0 0 18 18" fill="none"><circle cx="9" cy="9" r="7.9" stroke="#6d6e6f" stroke-width="1.3"/><path d="M5.5 9.3 L7.8 11.6 L12.5 6.6" stroke="#6d6e6f" stroke-width="1.3" stroke-linecap="round" stroke-linejoin="round"/></svg>
<span class="t" style="left:919.00px;top:416.96px;font-size:18px;line-height:18px;color:#1e1f21;letter-spacing:-0.126px;">Completed tasks</span>
<svg style="position:absolute;left:1070px;top:421px;" width="15" height="10" viewBox="0 0 15 10" fill="none"><path d="M2 2.5 L7.5 8 L13 2.5" stroke="#6d6e6f" stroke-width="1.7" stroke-linecap="round" stroke-linejoin="round"/></svg>
<div style="position:absolute;left:1108.8px;top:406px;width:155.20000000000005px;height:40.30000000000001px;border:1px solid #d6d3d3;box-sizing:border-box;border-radius:20px;"></div>
<svg style="position:absolute;left:1121px;top:417px;" width="17" height="18" viewBox="0 0 17 18" fill="none"><circle cx="8.5" cy="5.5" r="3.8" stroke="#6d6e6f" stroke-width="1.4"/><path d="M1.8 17 V15 Q1.8 11.8 5 11.8 H12 Q15.2 11.8 15.2 15 V17" stroke="#6d6e6f" stroke-width="1.4" stroke-linecap="round"/></svg>
<span class="t" style="left:1144.00px;top:416.96px;font-size:18px;line-height:18px;color:#1e1f21;letter-spacing:-0.102px;">Just my tasks</span>
<div style="position:absolute;left:1281.6px;top:406px;width:157.4000000000001px;height:40.30000000000001px;border:1px solid #d6d3d3;box-sizing:border-box;border-radius:20px;"></div>
<svg style="position:absolute;left:1292px;top:417px;" width="19" height="19" viewBox="0 0 19 19" fill="none"><rect x="1.5" y="3" width="16" height="14.8" rx="2.3" stroke="#6d6e6f" stroke-width="1.3"/><path d="M5.5 1.2 V4.5 M13.5 1.2 V4.5" stroke="#6d6e6f" stroke-width="1.3" stroke-linecap="round"/><path d="M7.3 8.3 H11.8 L9.2 14.8" stroke="#6d6e6f" stroke-width="1.3" stroke-linecap="round" stroke-linejoin="round"/></svg>
<span class="t" style="left:1315.00px;top:416.96px;font-size:18px;line-height:18px;color:#1e1f21;letter-spacing:-0.171px;">Due this week</span>
<div style="position:absolute;left:685px;top:463px;width:163.29999999999995px;height:40px;border:1px solid #d6d3d3;box-sizing:border-box;border-radius:20px;"></div>
<svg style="position:absolute;left:697px;top:473px;" width="19" height="19" viewBox="0 0 19 19" fill="none"><rect x="1.5" y="3" width="16" height="14.8" rx="2.3" stroke="#6d6e6f" stroke-width="1.3"/><path d="M5.5 1.2 V4.5 M13.5 1.2 V4.5" stroke="#6d6e6f" stroke-width="1.3" stroke-linecap="round"/><path d="M4.8 10.6 H13.5 M10.8 7.8 L13.6 10.6 L10.8 13.4" stroke="#6d6e6f" stroke-width="1.3" stroke-linecap="round" stroke-linejoin="round"/></svg>
<span class="t" style="left:719.70px;top:473.76px;font-size:18px;line-height:18px;color:#1e1f21;letter-spacing:-0.347px;">Due next week</span>
<span class="t" style="left:685.67px;top:535.41px;font-size:17px;line-height:17px;color:#6d6e6f;letter-spacing:0.742px;-webkit-text-stroke:0.35px #6d6e6f;">All filters</span>
<div style="position:absolute;left:685px;top:573px;width:281.5px;height:50.5px;border:1px solid #d6d3d3;box-sizing:border-box;border-radius:8px;"></div>
<div style="position:absolute;left:978px;top:573px;width:489.5px;height:50.5px;border:1px solid #d6d3d3;box-sizing:border-box;border-radius:8px;"></div>
<div style="position:absolute;left:685px;top:640px;width:281.5px;height:50.5px;border:1px solid #d6d3d3;box-sizing:border-box;border-radius:8px;"></div>
<div style="position:absolute;left:978px;top:640px;width:489.5px;height:50.5px;border:1px solid #d6d3d3;box-sizing:border-box;border-radius:8px;"></div>
<div style="position:absolute;left:685px;top:708px;width:281.5px;height:50.5px;border:1px solid #d6d3d3;box-sizing:border-box;border-radius:8px;"></div>
<div style="position:absolute;left:978px;top:708px;width:489.5px;height:50.5px;border:1px solid #d6d3d3;box-sizing:border-box;border-radius:8px;"></div>
<svg style="position:absolute;left:702px;top:587px;" width="24" height="24" viewBox="0 0 24 24" fill="none"><circle cx="12" cy="12" r="10.6" stroke="#6d6e6f" stroke-width="1.5"/><path d="M7.3 12.5 L10.3 15.5 L16.6 8.8" stroke="#6d6e6f" stroke-width="1.5" stroke-linecap="round" stroke-linejoin="round"/></svg>
<span class="t" style="left:736.50px;top:588.07px;font-size:20px;line-height:20px;color:#1e1f21;letter-spacing:0.314px;">Completion status</span>
<svg style="position:absolute;left:933px;top:593px;" width="15" height="10" viewBox="0 0 15 10" fill="none"><path d="M2.3 3 L7.5 8 L12.7 3" stroke="#6d6e6f" stroke-width="1.6" stroke-linecap="round" stroke-linejoin="round"/></svg>
<span class="t" style="left:995.60px;top:588.07px;font-size:20px;line-height:20px;color:#1e1f21;letter-spacing:0.275px;">Incomplete tasks</span>
<svg style="position:absolute;left:1434px;top:593px;" width="15" height="10" viewBox="0 0 15 10" fill="none"><path d="M2.3 3 L7.5 8 L12.7 3" stroke="#6d6e6f" stroke-width="1.6" stroke-linecap="round" stroke-linejoin="round"/></svg>
<svg style="position:absolute;left:1489.5px;top:589.3px;" width="18" height="18" viewBox="0 0 18 18" fill="none"><path d="M1.8 1.8 L16.2 16.2 M16.2 1.8 L1.8 16.2" stroke="#6d6e6f" stroke-width="1.8" stroke-linecap="round"/></svg>
<svg style="position:absolute;left:703px;top:655px;" width="22" height="23" viewBox="0 0 22 23" fill="none"><circle cx="11" cy="6.3" r="4.6" stroke="#6d6e6f" stroke-width="1.5"/><path d="M1.5 22 V19.5 Q1.5 15 6 15 H16 Q20.5 15 20.5 19.5 V22" stroke="#6d6e6f" stroke-width="1.5" stroke-linecap="round"/></svg>
<span class="t" style="left:737.50px;top:656.07px;font-size:20px;line-height:20px;color:#1e1f21;letter-spacing:-0.122px;">Assignee</span>
<svg style="position:absolute;left:933px;top:661px;" width="15" height="10" viewBox="0 0 15 10" fill="none"><path d="M2.3 3 L7.5 8 L12.7 3" stroke="#6d6e6f" stroke-width="1.6" stroke-linecap="round" stroke-linejoin="round"/></svg>
<div style="position:absolute;left:983px;top:648px;width:199.5px;height:33.60000000000002px;background:#e8e6e5;border-radius:17px;"></div>
<svg style="position:absolute;left:982.7px;top:648.0px;" width="33.6" height="33.6" viewBox="0 0 33.6 33.6" fill="none"><clipPath id="cpa5"><circle cx="17" cy="17" r="16.6"/></clipPath><g transform="scale(0.9882352941176471)"><g clip-path="url(#cpa5)"><rect width="34" height="34" fill="#ebe9e8"/><path d="M8.5 34 C7 22 8 7 17 6.5 C25 6.5 26.5 14 26.5 22 C26.5 27 28 31 30 34Z" fill="#2b1d18"/><rect x="14" y="19" width="6" height="8" fill="#b47c60"/><path d="M4 34 C6 28 10 26.5 17 26.5 C21 26.5 23 28 24 34Z" fill="#b47c60"/><path d="M3 34 L6 29.5 L9 30 L8 34Z" fill="#7b4fd0"/><ellipse cx="16.5" cy="16" rx="5.8" ry="7.6" fill="#b47c60"/><path d="M22 10 C25 13 25.5 20 25.5 24 C25.5 29 27 32 29 34 L23 34 C22.5 28 22.8 18 22 10Z" fill="#2b1d18"/><path d="M14 20.5 Q16.5 22.5 19 20.5" stroke="#f4e6e0" stroke-width="1.2" fill="none"/></g><circle cx="17" cy="17" r="16.6" stroke="#8ed3cb" stroke-width="0.8" opacity="0.55"/></g></svg>
<span class="t" style="left:1022.60px;top:655.57px;font-size:20px;line-height:20px;color:#1e1f21;letter-spacing:-0.018px;">Jamie Staples</span>
<svg style="position:absolute;left:1159.5px;top:657.5px;" width="14" height="14" viewBox="0 0 14 14" fill="none"><path d="M2.5 2.5 L11.5 11.5 M11.5 2.5 L2.5 11.5" stroke="#1e1f21" stroke-width="1.8" stroke-linecap="round"/></svg>
<svg style="position:absolute;left:1489.5px;top:657px;" width="18" height="18" viewBox="0 0 18 18" fill="none"><path d="M1.8 1.8 L16.2 16.2 M16.2 1.8 L1.8 16.2" stroke="#6d6e6f" stroke-width="1.8" stroke-linecap="round"/></svg>
<svg style="position:absolute;left:702px;top:721px;" width="24" height="24" viewBox="0 0 24 24" fill="none"><rect x="3.3" y="3.5" width="18.5" height="18.5" rx="3" stroke="#6d6e6f" stroke-width="1.5"/><path d="M3.3 8.8 H21.8 M7.8 1.5 V5 M17.3 1.5 V5" stroke="#6d6e6f" stroke-width="1.5" stroke-linecap="round"/></svg>
<span class="t" style="left:736.50px;top:723.27px;font-size:20px;line-height:20px;color:#1e1f21;letter-spacing:0.064px;">Due date</span>
<svg style="position:absolute;left:933px;top:728px;" width="15" height="10" viewBox="0 0 15 10" fill="none"><path d="M2.3 3 L7.5 8 L12.7 3" stroke="#6d6e6f" stroke-width="1.6" stroke-linecap="round" stroke-linejoin="round"/></svg>
<div style="position:absolute;left:995px;top:719px;width:104px;height:28px;background:#e8e6e5;border-radius:14px;"></div>
<span class="t" style="left:1006.00px;top:725.11px;font-size:17px;line-height:17px;color:#1e1f21;letter-spacing:0.375px;">Due today</span>
<svg style="position:absolute;left:1434px;top:728px;" width="15" height="10" viewBox="0 0 15 10" fill="none"><path d="M2.3 3 L7.5 8 L12.7 3" stroke="#6d6e6f" stroke-width="1.6" stroke-linecap="round" stroke-linejoin="round"/></svg>
<svg style="position:absolute;left:1489.5px;top:724.7px;" width="18" height="18" viewBox="0 0 18 18" fill="none"><path d="M1.8 1.8 L16.2 16.2 M16.2 1.8 L1.8 16.2" stroke="#6d6e6f" stroke-width="1.8" stroke-linecap="round"/></svg>
<svg style="position:absolute;left:703px;top:798px;" width="17" height="17" viewBox="0 0 17 17" fill="none"><path d="M8.5 2.6 V15 M2.3 8.8 H14.7" stroke="#6d6e6f" stroke-width="2.3" stroke-linecap="round"/></svg>
<span class="t" style="left:726.17px;top:796.57px;font-size:20px;line-height:20px;color:#6d6e6f;letter-spacing:0.487px;-webkit-text-stroke:0.35px #6d6e6f;">Add filter</span>
<svg style="position:absolute;left:818px;top:802px;" width="14" height="10" viewBox="0 0 14 10" fill="none"><path d="M2 2.5 L7 7.5 L12 2.5" stroke="#6d6e6f" stroke-width="1.7" stroke-linecap="round" stroke-linejoin="round"/></svg>
</body></html>
